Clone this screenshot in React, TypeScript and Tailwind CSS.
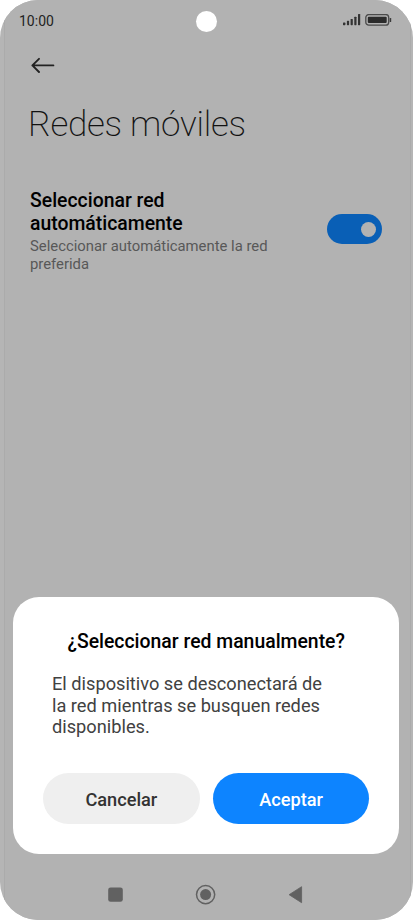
import { useState } from "react";

const SignalIcon = () => (
  <svg width="18" height="12" viewBox="0 0 18 12" fill="#333333">
    <rect x="0" y="8.6" width="2.4" height="2.6" rx="0.6" />
    <rect x="3.9" y="6.8" width="2.2" height="4.4" rx="0.6" />
    <rect x="7.6" y="4.9" width="2.2" height="6.3" rx="0.6" />
    <rect x="11.3" y="2.7" width="2.2" height="8.5" rx="0.6" />
    <rect x="15" y="0" width="2.2" height="11.2" rx="0.6" />
  </svg>
);

const BatteryIcon = () => (
  <svg width="27" height="12" viewBox="0 0 27 12">
    <rect
      x="0.8"
      y="0.6"
      width="22.9"
      height="10.6"
      rx="3"
      fill="none"
      stroke="#4a4a4a"
      strokeWidth="1.3"
    />
    <rect x="2.8" y="2.7" width="18.9" height="6.4" rx="1" fill="#2b2b2b" />
    <rect x="24.7" y="4" width="1.5" height="4" rx="0.6" fill="#3a3a3a" />
  </svg>
);

const BackIcon = () => (
  <svg
    width="24"
    height="16"
    viewBox="0 0 24 16"
    fill="none"
    stroke="#222222"
    strokeWidth="1.9"
    strokeLinecap="round"
    strokeLinejoin="round"
  >
    <path d="M22.4 8.4H1.4M8 1.8L1.4 8.4l6.6 6.6" />
  </svg>
);

const StatusBar = () => (
  <div className="relative flex h-10 items-center justify-between pl-[14px] pr-[18px]">
    <span className="pt-0.5 text-[14px] leading-4 text-[#222222]">10:00</span>
    <div className="absolute left-[191px] top-[10.5px] size-[21px] rounded-full bg-white" />
    <div className="flex items-center gap-[4px] pt-[0.5px]">
      <SignalIcon />
      <BatteryIcon />
    </div>
  </div>
);

type SwitchProps = {
  checked: boolean;
  onChange: () => void;
};

const Switch = ({ checked, onChange }: SwitchProps) => (
  <button
    role="switch"
    aria-checked={checked}
    aria-label="Seleccionar red automáticamente"
    onClick={onChange}
    className={`flex h-[30px] w-[55px] items-center rounded-full px-[6px] ${
      checked ? "justify-end bg-[#095fb6]" : "justify-start bg-[#8c8c8c]"
    }`}
  >
    <span className="size-[15px] rounded-full bg-[#b2b2b2]" />
  </button>
);

const Dialog = () => (
  <div
    role="dialog"
    className="ml-2 w-[386.4px] rounded-[26px] bg-white px-[30px] pb-[30px] pt-[33px]"
  >
    <h2 className="text-center text-[19.4px] font-medium leading-[23px] text-black">
      ¿Seleccionar red manualmente?
    </h2>
    <p className="mt-5 pl-[9px] text-[18.23px] leading-[21.3px] text-[#414141]">
      El dispositivo se desconectará de
      <br />
      la red mientras se busquen redes
      <br />
      disponibles.
    </p>
    <div className="mt-[35.6px] flex gap-[13px]">
      <button className="h-[51.6px] flex-1 rounded-full bg-[#efefef] pt-[1.5px] text-[18.2px] font-medium text-[#333333]">
        Cancelar
      </button>
      <button className="h-[51.6px] flex-1 rounded-full bg-[#0d84ff] pt-[1.5px] text-[18.2px] font-medium text-white">
        Aceptar
      </button>
    </div>
  </div>
);

const NavigationBar = () => (
  <div className="flex h-[65.7px] items-center pl-[102px] pt-[16px]">
    <svg width="200" height="22" viewBox="0 0 200 22" fill="#616161">
      <rect x="1.2" y="3.4" width="14.6" height="14.4" rx="2.4" />
      <circle cx="98.6" cy="10.6" r="9.1" fill="none" stroke="#616161" strokeWidth="1.5" />
      <circle cx="98.6" cy="10.6" r="5.5" />
      <path d="M182.1 10.7L194.6 2.7V18.7z" stroke="#616161" strokeWidth="0.8" strokeLinejoin="round" />
    </svg>
  </div>
);

const App = () => {
  const [automatic, setAutomatic] = useState(true);

  return (
    <div className="h-[920px] w-[413px] overflow-hidden rounded-[38px] bg-[#b5b5b5] pl-[5px] pr-[2px] font-['Roboto',sans-serif]">
      <div className="-ml-px flex h-full flex-col border-l border-r border-[#ababab] bg-[#b2b2b2]">
        <StatusBar />
        <header>
          <button aria-label="Atrás" className="ml-[26px] mt-[17px] block">
            <BackIcon />
          </button>
          <h1 className="ml-[23px] mt-[32px] text-[35px] font-extralight leading-10 tracking-[-0.24px] text-[#111111]">
            Redes móviles
          </h1>
        </header>
        <main className="mt-[44px] flex flex-1 items-start justify-between pl-[25px] pr-[28px]">
          <div>
            <h3 className="text-[19.4px] font-medium leading-[23px] text-black">
              Seleccionar red
              <br />
              automáticamente
            </h3>
            <p className="mt-[3px] text-[14.85px] leading-[17.6px] text-[#585858]">
              Seleccionar automáticamente la red
              <br />
              preferida
            </p>
          </div>
          <div className="pt-[25px]">
            <Switch checked={automatic} onChange={() => setAutomatic(!automatic)} />
          </div>
        </main>
        <Dialog />
        <NavigationBar />
      </div>
    </div>
  );
};

export default App;
